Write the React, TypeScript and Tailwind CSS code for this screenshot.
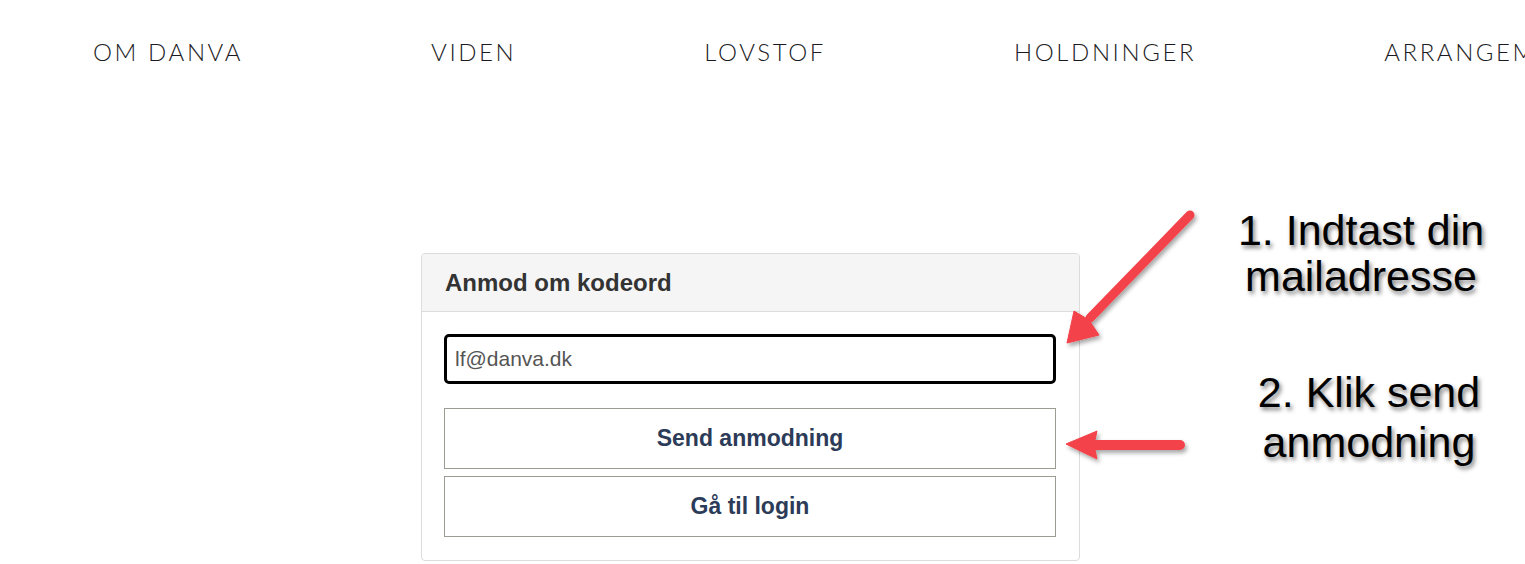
import React from "react";

const navItems = ["OM DANVA", "VIDEN", "LOVSTOF", "HOLDNINGER", "ARRANGEMENTER"];

function Arrows() {
  return (
    <svg
      className="absolute left-0 top-0 pointer-events-none"
      width={1525}
      height={564}
      viewBox="0 0 1525 564"
    >
      <defs>
        <filter id="sh" x="-20%" y="-20%" width="140%" height="140%">
          <feDropShadow dx="2" dy="3" stdDeviation="2" floodColor="#000" floodOpacity="0.35" />
        </filter>
      </defs>
      <g filter="url(#sh)" fill="#f3424a" stroke="#f3424a">
        <line x1={1190} y1={215} x2={1090} y2={318} strokeWidth={9} strokeLinecap="round" />
        <polygon points="1067,343 1074,311 1089,320 1099,335" strokeWidth={1} strokeLinejoin="round" />
        <line x1={1180} y1={445} x2={1094} y2={445} strokeWidth={10} strokeLinecap="round" />
        <polygon points="1066,444 1097,431 1094,445 1097,459" strokeWidth={1} strokeLinejoin="round" />
      </g>
    </svg>
  );
}

export default function App() {
  return (
    <div className="relative w-[1525px] h-[564px] overflow-hidden bg-white">
      <nav
        className="flex gap-[188px] pl-[93px] pt-[40px] whitespace-nowrap text-[24px] leading-[24px] tracking-[2.6px] font-light text-[#1b1b24]"
        style={{ fontFamily: "Lato, 'Open Sans', sans-serif" }}
      >
        {navItems.map((n) => (
          <span key={n}>{n}</span>
        ))}
      </nav>

      <div
        className="ml-[421px] mt-[189px] w-[659px] border border-[#dcdcdc] rounded-[4px] bg-white"
        style={{ fontFamily: "'Liberation Sans', Arial, sans-serif" }}
      >
        <div className="h-[58px] bg-[#f5f5f5] border-b border-[#dcdcdc] rounded-t-[4px] flex items-center pl-[23px]">
          <h2 className="text-[24px] font-bold text-[#333]">Anmod om kodeord</h2>
        </div>
        <div className="pl-[22px] pr-[23px] pt-[22px] pb-[23px] flex flex-col">
          <div className="h-[50px] border-[3px] border-black rounded-[5px] flex items-center pl-[8px] text-[21px] text-[#555]">
            lf@danva.dk
          </div>
          <button className="mt-[24px] h-[61px] border border-[#9c9c92] bg-white text-[23px] font-bold text-[#2c3b58]">
            Send anmodning
          </button>
          <button className="mt-[7px] h-[61px] border border-[#9c9c92] bg-white text-[23px] font-bold text-[#2c3b58]">
            Gå til login
          </button>
        </div>
      </div>

      <Arrows />

      <div
        className="absolute left-[1221px] top-[207px] w-[280px] text-center text-[43px] leading-[46px] text-black"
        style={{ fontFamily: "'Liberation Sans', Arial, sans-serif", textShadow: "2px 3px 4px rgba(0,0,0,0.5)" }}
      >
        <div>1. Indtast din</div>
        <div>mailadresse</div>
      </div>
      <div
        className="absolute left-[1228px] top-[367px] w-[282px] text-center text-[43px] leading-[50px] text-black"
        style={{ fontFamily: "'Liberation Sans', Arial, sans-serif", textShadow: "2px 3px 4px rgba(0,0,0,0.5)" }}
      >
        <div>2. Klik send</div>
        <div>anmodning</div>
      </div>
    </div>
  );
}
